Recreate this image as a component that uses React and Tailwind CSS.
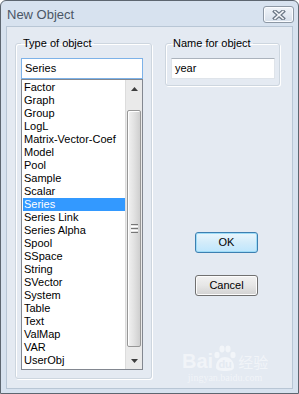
import React from "react";

const types = [
  "Factor", "Graph", "Group", "LogL", "Matrix-Vector-Coef", "Model", "Pool",
  "Sample", "Scalar", "Series", "Series Link", "Series Alpha", "Spool", "SSpace",
  "String", "SVector", "System", "Table", "Text", "ValMap", "VAR", "UserObj",
];

const ScrollBar = () => (
  <div className="w-[17px] flex flex-col bg-[#eaeaea] border-l border-[#dcdcdc]">
    <div className="h-[17px] flex items-center justify-center">
      <svg width="7" height="4" viewBox="0 0 7 4"><path d="M0 4 L3.5 0 L7 4 Z" fill="#3d3d3d" /></svg>
    </div>
    <div className="h-[13px]" />
    <div className="h-[237px] mx-[1px] rounded-[2px] border border-[#979797] bg-gradient-to-r from-[#f2f2f2] via-[#e2e2e2] to-[#cfcfcf] shadow-[inset_1px_1px_0_#fff] flex items-center justify-center">
      <div className="flex flex-col gap-[1px]">
        <div className="w-[7px] h-[1px] bg-[#777]" />
        <div className="w-[7px] h-[1px] bg-[#fff]" />
        <div className="w-[7px] h-[1px] bg-[#777]" />
        <div className="w-[7px] h-[1px] bg-[#fff]" />
        <div className="w-[7px] h-[1px] bg-[#777]" />
      </div>
    </div>
    <div className="flex-1" />
    <div className="h-[17px] flex items-center justify-center">
      <svg width="7" height="4" viewBox="0 0 7 4"><path d="M0 0 L7 0 L3.5 4 Z" fill="#3d3d3d" /></svg>
    </div>
  </div>
);

// legend is placed inside the padding, so no extra margin
const GroupBox = ({ label, className, children }) => (
  <fieldset className={"border border-[#cdd6df] rounded-[3px] shadow-[1px_1px_0_#fff,inset_1px_1px_0_#fff] " + className}>
    <legend className="px-[2px] leading-[13px] text-[11px] text-black">{label}</legend>
    {children}
  </fieldset>
);

export default function App() {
  return (
    <div className="w-[299px] h-[394px] flex flex-col bg-[#d7e2ef] border border-[#5d6670] rounded-t-[6px] font-['Liberation_Sans',Arial,sans-serif] overflow-hidden">
      {/* title bar */}
      <div className="h-[25px] flex items-center justify-between pl-[6px] pr-[4px]">
        <span className="text-[13px] text-[#4a5666] mt-[2px]">New Object</span>
        <button className="w-[31px] h-[17px] mt-[2px] rounded-[3px] border border-[#8d98a5] bg-gradient-to-b from-[#f0f4f9] to-[#d6dfea] shadow-[inset_0_0_0_1px_#fafcff] flex items-center justify-center">
          <svg width="14" height="10" viewBox="0 0 14 10">
            <path d="M3 1.5 L11 8.5 M11 1.5 L3 8.5" stroke="#6c7886" strokeWidth="4" strokeLinecap="square" />
            <path d="M3 1.5 L11 8.5 M11 1.5 L3 8.5" stroke="#f4f6f9" strokeWidth="1.6" strokeLinecap="square" />
          </svg>
        </button>
      </div>

      {/* client area */}
      <div className="relative flex-1 mx-[5px] mb-[4px] border border-[#b8c6d5] bg-[#e4eaf2] flex items-start pl-[8px] pt-[10px]">
        <GroupBox label="Type of object" className="w-[137px] pl-[5px] pr-[8px] pt-[8px] pb-[8px]">
          <div className="h-[21px] border border-[#7db2e8] bg-white pl-[3px] text-[11px] leading-[19px] text-black">Series</div>
          <div className="h-[291px] border border-[#828790] bg-white flex">
            <div className="w-[103px] pt-[1px] pl-[1px]">
              {types.map((t) => (
                <div
                  key={t}
                  className={
                    "h-[13px] leading-[13px] text-[11px] pl-[1px] whitespace-nowrap " +
                    (t === "Series" ? "bg-[#3399ff] text-white" : "text-black")
                  }
                >
                  {t}
                </div>
              ))}
            </div>
            <ScrollBar />
          </div>
        </GroupBox>

        <div className="ml-[13px] w-[115px] flex flex-col">
          <GroupBox label="Name for object" className="w-[115px] pl-[5px] pr-[4px] pt-[8px] pb-[6px]">
            <div className="h-[21px] border border-[#dfe4ea] border-t-[#abb3bd] bg-white pl-[3px] text-[11px] leading-[19px] text-black">year</div>
          </GroupBox>
          <div className="ml-[30px] mt-[146px] flex flex-col gap-[22px]">
            <button className="w-[63px] h-[21px] rounded-[3px] border border-[#3c7fb1] bg-gradient-to-b from-[#eaf6fd] via-[#d3ecfa] to-[#bee6fd] shadow-[inset_0_0_0_1px_#9edcf7] text-[11px] text-black leading-[19px]">OK</button>
            <button className="w-[63px] h-[21px] rounded-[3px] border border-[#707070] bg-gradient-to-b from-[#f2f2f2] via-[#e6e6e6] to-[#d2d2d2] shadow-[inset_0_0_0_1px_#fcfcfc] text-[11px] text-black leading-[19px]">Cancel</button>
          </div>
        </div>

        {/* watermark */}
        <div className="absolute left-[175px] top-[318px] flex flex-col items-center text-white/50 pointer-events-none">
          <div className="flex items-end">
            <span className="text-[20px] font-bold leading-[20px]">Bai</span>
            <span className="relative w-[24px] h-[26px] flex items-end justify-center">
              <svg width="24" height="26" viewBox="0 0 24 26" className="absolute left-0 top-0">
                <g fill="rgba(255,255,255,0.5)">
                  <ellipse cx="4" cy="10" rx="2.6" ry="3.2" />
                  <ellipse cx="9" cy="4" rx="2.6" ry="3.4" />
                  <ellipse cx="15" cy="4" rx="2.6" ry="3.4" />
                  <ellipse cx="20" cy="10" rx="2.6" ry="3.2" />
                  <path d="M3 22 C3 15 8 12 12 12 C16 12 21 15 21 22 C21 25 18 26 12 26 C6 26 3 25 3 22 Z" />
                </g>
              </svg>
              <span className="relative text-[11px] font-bold leading-[13px] text-[#e4eaf2]">du</span>
            </span>
            <span className="ml-[1px] text-[15px] leading-[18px] font-['Noto_Sans_CJK_SC',sans-serif]">经验</span>
          </div>
          <span className="text-[10px] leading-[12px] font-['Liberation_Serif',serif] mt-[1px]">jingyan.baidu.com</span>
        </div>
      </div>
    </div>
  );
}
